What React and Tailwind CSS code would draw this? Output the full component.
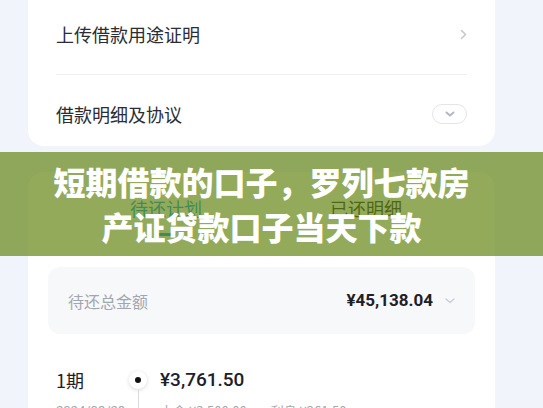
export default function App() {
  const cjk = { fontFamily: '"Noto Sans CJK SC", "Noto Sans", sans-serif' };
  const num = { fontFamily: 'Roboto, "Noto Sans CJK SC", sans-serif' };

  return (
    <div
      className="relative h-[408px] overflow-hidden bg-[#f2f4fb] pl-[28px] pr-[48px]"
      style={cjk}
    >
      {/* Top card */}
      <div className="-mt-[16px] rounded-2xl bg-white">
        <div className="flex h-[90px] items-center justify-between px-[28px] pt-[10px]">
          <span className="text-[18px] text-[#2a2d33]">上传借款用途证明</span>
          <svg width="7" height="11" viewBox="0 0 7 11" fill="none">
            <path d="M1.5 1.5L5.5 5.5L1.5 9.5" stroke="#c3c6cd" strokeWidth="1.5" strokeLinecap="round" strokeLinejoin="round" />
          </svg>
        </div>
        <div className="mx-[28px] h-px bg-[#eef0f3]" />
        <div className="flex h-[71px] items-center justify-between px-[28px] pt-[7px]">
          <span className="text-[18px] text-[#2a2d33]">借款明细及协议</span>
          <div className="flex h-[20px] w-[35px] items-center justify-center rounded-full border border-[#e3e5ea]">
            <svg width="10" height="6" viewBox="0 0 10 6" fill="none">
              <path d="M1.5 1.5L5 4.5L8.5 1.5" stroke="#b3b7c2" strokeWidth="2" strokeLinecap="round" strokeLinejoin="round" />
            </svg>
          </div>
        </div>
      </div>

      {/* Repayment card */}
      <div className="mt-[26px] rounded-2xl bg-white pb-8">
        <div className="flex items-start gap-[128px] pl-[102px] pt-[23px]">
          <div className="flex flex-col items-center">
            <span className="text-[18px] leading-[26px] text-[#0a9ef0]">待还计划</span>
            <div className="mt-[12px] h-[3px] w-[20px] rounded-full bg-[#0a9ef0]" />
          </div>
          <span className="text-[18px] leading-[26px] text-[#333]">已还明细</span>
        </div>

        <div className="mx-[20px] mt-[31px] flex h-[67px] items-center justify-between rounded-xl bg-[#f7f8fa] px-[20px]">
          <span className="text-[16px] text-[#a3a6ad]">待还总金额</span>
          <div className="flex items-center gap-[12px]">
            <span className="text-[17px] font-bold text-[#1d2026]" style={num}>
              ¥45,138.04
            </span>
            <svg width="10" height="6" viewBox="0 0 10 6" fill="none">
              <path d="M1 1L5 4.5L9 1" stroke="#c8cbd3" strokeWidth="1.3" strokeLinecap="round" strokeLinejoin="round" />
            </svg>
          </div>
        </div>

        <div className="mt-[32px] flex items-start pl-[28px]">
          <div className="w-[72px]">
            <div className="text-[18px] leading-[28px] text-[#1d2026]">1期</div>
            <div className="mt-[8px] text-[13px] leading-[18px] text-[#a3a6ad]" style={num}>
              2024/03/28
            </div>
          </div>
          <div className="flex w-[20px] flex-col items-center pt-[5px]">
            <div className="flex h-[18px] w-[18px] items-center justify-center rounded-full bg-white shadow-[0_1px_4px_rgba(0,0,0,0.15)]">
              <div className="h-[6px] w-[6px] rounded-full bg-[#111]" />
            </div>
            <div className="h-[40px] w-px bg-[#d9dbe0]" />
          </div>
          <div className="ml-[12px]">
            <div className="text-[19px] font-medium leading-[28px] text-[#1d2026]" style={num}>
              ¥3,761.50
            </div>
            <div className="mt-[8px] flex gap-[24px] text-[13px] leading-[18px] text-[#a3a6ad]">
              <span>本金 ¥3,500.00</span>
              <span>利息 ¥261.50</span>
            </div>
          </div>
        </div>
      </div>

      {/* Title banner overlay */}
      <div className="absolute left-0 top-[152px] flex h-[104px] w-full items-center justify-center bg-[rgba(94,128,10,0.67)] pr-[20px]">
        <h1 className="text-center text-[32px] font-black leading-[45px] text-white">
          短期借款的口子，罗列七款房
          <br />
          产证贷款口子当天下款
        </h1>
      </div>
    </div>
  );
}
